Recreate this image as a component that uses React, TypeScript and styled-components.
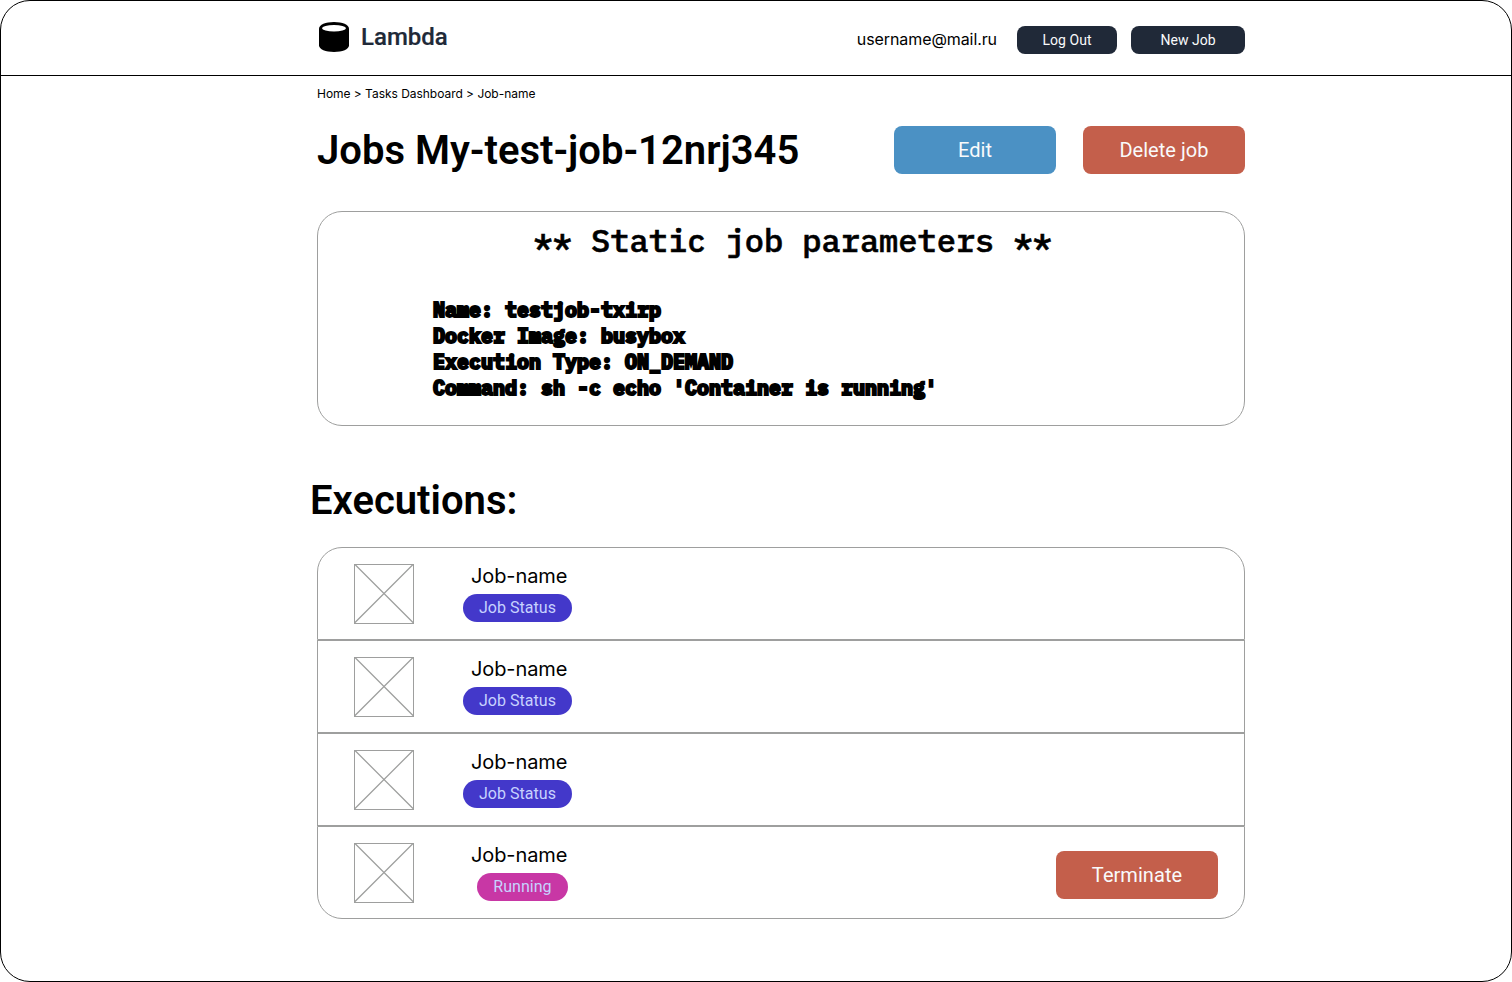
import React from "react";
import styled, { createGlobalStyle } from "styled-components";

const GlobalStyle = createGlobalStyle`
  * { box-sizing: border-box; }
  body { margin: 0; background: #fff; color: #000; }
  h1, h2, p { margin: 0; }
`;

const roboto = `Roboto, "Liberation Sans", sans-serif`;
const inter = `Inter, "Liberation Sans", sans-serif`;
const mono = `"IBM Plex Mono", "Liberation Mono", monospace`;

const Frame = styled.div`
  width: 1512px;
  height: 982px;
  border: 1px solid #000;
  border-radius: 30px;
  overflow: hidden;
  background: #fff;
  font-family: ${roboto};
`;

const Header = styled.header`
  height: 75px;
  border-bottom: 1px solid #000;
  padding: 0 266px 0 318px;
  display: flex;
  justify-content: space-between;
  align-items: flex-start;
`;

const Brand = styled.div`
  display: flex;
  align-items: center;
  gap: 12px;
  height: 30px;
  margin-top: 21px;
`;

const BrandName = styled.span`
  font: 500 24px/30px ${roboto};
  -webkit-text-stroke: 0.2px #202938;
  color: #202938;
`;

const Account = styled.div`
  display: flex;
  align-items: flex-start;
  margin-top: 25px;
`;

const Email = styled.span`
  font: 400 16px/26px ${inter};
  letter-spacing: -0.09px;
  margin-right: 20px;
`;

const HeaderButton = styled.button<{ $width: number }>`
  width: ${(p) => p.$width}px;
  height: 28px;
  padding: 0;
  border: 0;
  border-radius: 8px;
  background: #202938;
  color: #f9fafb;
  font: 400 14px/28px ${roboto};
  letter-spacing: 0.03px;
  & + & { margin-left: 14px; }
`;

const Main = styled.main`
  width: 928px;
  margin-left: 316px;
`;

const Breadcrumbs = styled.nav`
  font: 400 12px/16px ${inter};
  letter-spacing: -0.03px;
  padding-top: 10px;
  white-space: pre;
`;

const TitleRow = styled.div`
  display: flex;
  align-items: center;
  height: 48px;
  margin-top: 24px;
`;

const Title = styled.h1`
  font: 600 40px/48px ${roboto};
  flex: 1;
  padding-top: 2px;
  white-space: nowrap;
`;

const ActionButton = styled.button<{ $tone: "edit" | "danger" }>`
  width: 162px;
  height: 48px;
  padding: 0;
  border: 0;
  border-radius: 8px;
  background: ${(p) => (p.$tone === "edit" ? "#4b91c4" : "#c45f4b")};
  color: #f9fafb;
  font: 400 20px/48px ${roboto};
  letter-spacing: 0.05px;
  & + & { margin-left: 27px; }
`;

const Parameters = styled.section`
  height: 215px;
  margin-top: 37px;
  border: 1px solid #9e9f9e;
  border-radius: 25px;
  font-family: ${mono};
`;

const ParametersTitle = styled.h2`
  margin: 7px 0 0 215.5px;
  font: 500 32px/42px ${mono};
  -webkit-text-stroke: 0.6px #000;
  white-space: pre;
`;

const ParameterList = styled.div`
  margin: 35.5px 0 0 115px;
  font: 700 20px/26px ${mono};
  -webkit-text-stroke: 2px #000;
  white-space: pre;
`;

const SectionTitle = styled.h2`
  margin: 51px 0 0 -7px;
  font: 600 40px/48px ${roboto};
`;

const Executions = styled.section`
  margin-top: 22px;
`;

const ExecutionRow = styled.article`
  display: flex;
  align-items: flex-start;
  height: 93px;
  padding: 16px 26px 0 36px;
  border: 1px solid #9e9f9e;
  &:first-child { border-radius: 25px 25px 0 0; }
  &:last-child { border-radius: 0 0 25px 25px; }
`;

const Info = styled.div`
  margin-left: 49px;
  flex: 1;
`;

const JobName = styled.p`
  margin-left: 8px;
  font: 400 20px/24px ${inter};
  letter-spacing: -0.1px;
`;

const Badge = styled.span<{ $running: boolean }>`
  display: block;
  width: ${(p) => (p.$running ? 91 : 109)}px;
  height: 28px;
  margin: 6px 0 0 ${(p) => (p.$running ? 14 : 0)}px;
  border-radius: 14px;
  background: ${(p) => (p.$running ? "#c837a5" : "#4338ca")};
  color: #c7d2fe;
  font: 400 16px/28px ${roboto};
  letter-spacing: 0.03px;
  text-align: center;
`;

const RowAction = styled.div`
  margin-top: 8px;
`;

const DatabaseIcon = () => (
  <svg width="30" height="30" viewBox="0 0 30 30">
    <path d="M0 6.5C0 2.8 6.7 0 15 0s15 2.8 15 6.5v17C30 27.2 23.3 30 15 30S0 27.2 0 23.5Z" />
    <ellipse cx="15" cy="6.3" rx="12" ry="3.2" fill="#fff" />
  </svg>
);

const Placeholder = () => (
  <svg width="60" height="60" viewBox="0 0 60 60" fill="none" stroke="#9e9f9e">
    <rect x=".5" y=".5" width="59" height="59" />
    <path d="M.5 0l59 59M59.5 0l-59 59" strokeWidth="1.25" />
  </svg>
);

const executions = [
  { status: "Job Status", running: false },
  { status: "Job Status", running: false },
  { status: "Job Status", running: false },
  { status: "Running", running: true },
];

const parameters = `Name: testjob-txirp
Docker Image: busybox
Execution Type: ON_DEMAND
Command: sh -c echo 'Container is running'`;

export default function App() {
  return (
    <Frame>
      <GlobalStyle />
      <Header>
        <Brand>
          <DatabaseIcon />
          <BrandName>Lambda</BrandName>
        </Brand>
        <Account>
          <Email>username@mail.ru</Email>
          <HeaderButton $width={100}>Log Out</HeaderButton>
          <HeaderButton $width={114}>New Job</HeaderButton>
        </Account>
      </Header>
      <Main>
        <Breadcrumbs>{"Home > Tasks Dashboard > Job-name"}</Breadcrumbs>
        <TitleRow>
          <Title>Jobs My-test-job-12nrj345</Title>
          <ActionButton $tone="edit">Edit</ActionButton>
          <ActionButton $tone="danger">Delete job</ActionButton>
        </TitleRow>
        <Parameters>
          <ParametersTitle>** Static job parameters **</ParametersTitle>
          <ParameterList>{parameters}</ParameterList>
        </Parameters>
        <SectionTitle>Executions:</SectionTitle>
        <Executions>
          {executions.map((job, i) => (
            <ExecutionRow key={i}>
              <Placeholder />
              <Info>
                <JobName>Job-name</JobName>
                <Badge $running={job.running}>{job.status}</Badge>
              </Info>
              {job.running && (
                <RowAction>
                  <ActionButton $tone="danger">Terminate</ActionButton>
                </RowAction>
              )}
            </ExecutionRow>
          ))}
        </Executions>
      </Main>
    </Frame>
  );
}
